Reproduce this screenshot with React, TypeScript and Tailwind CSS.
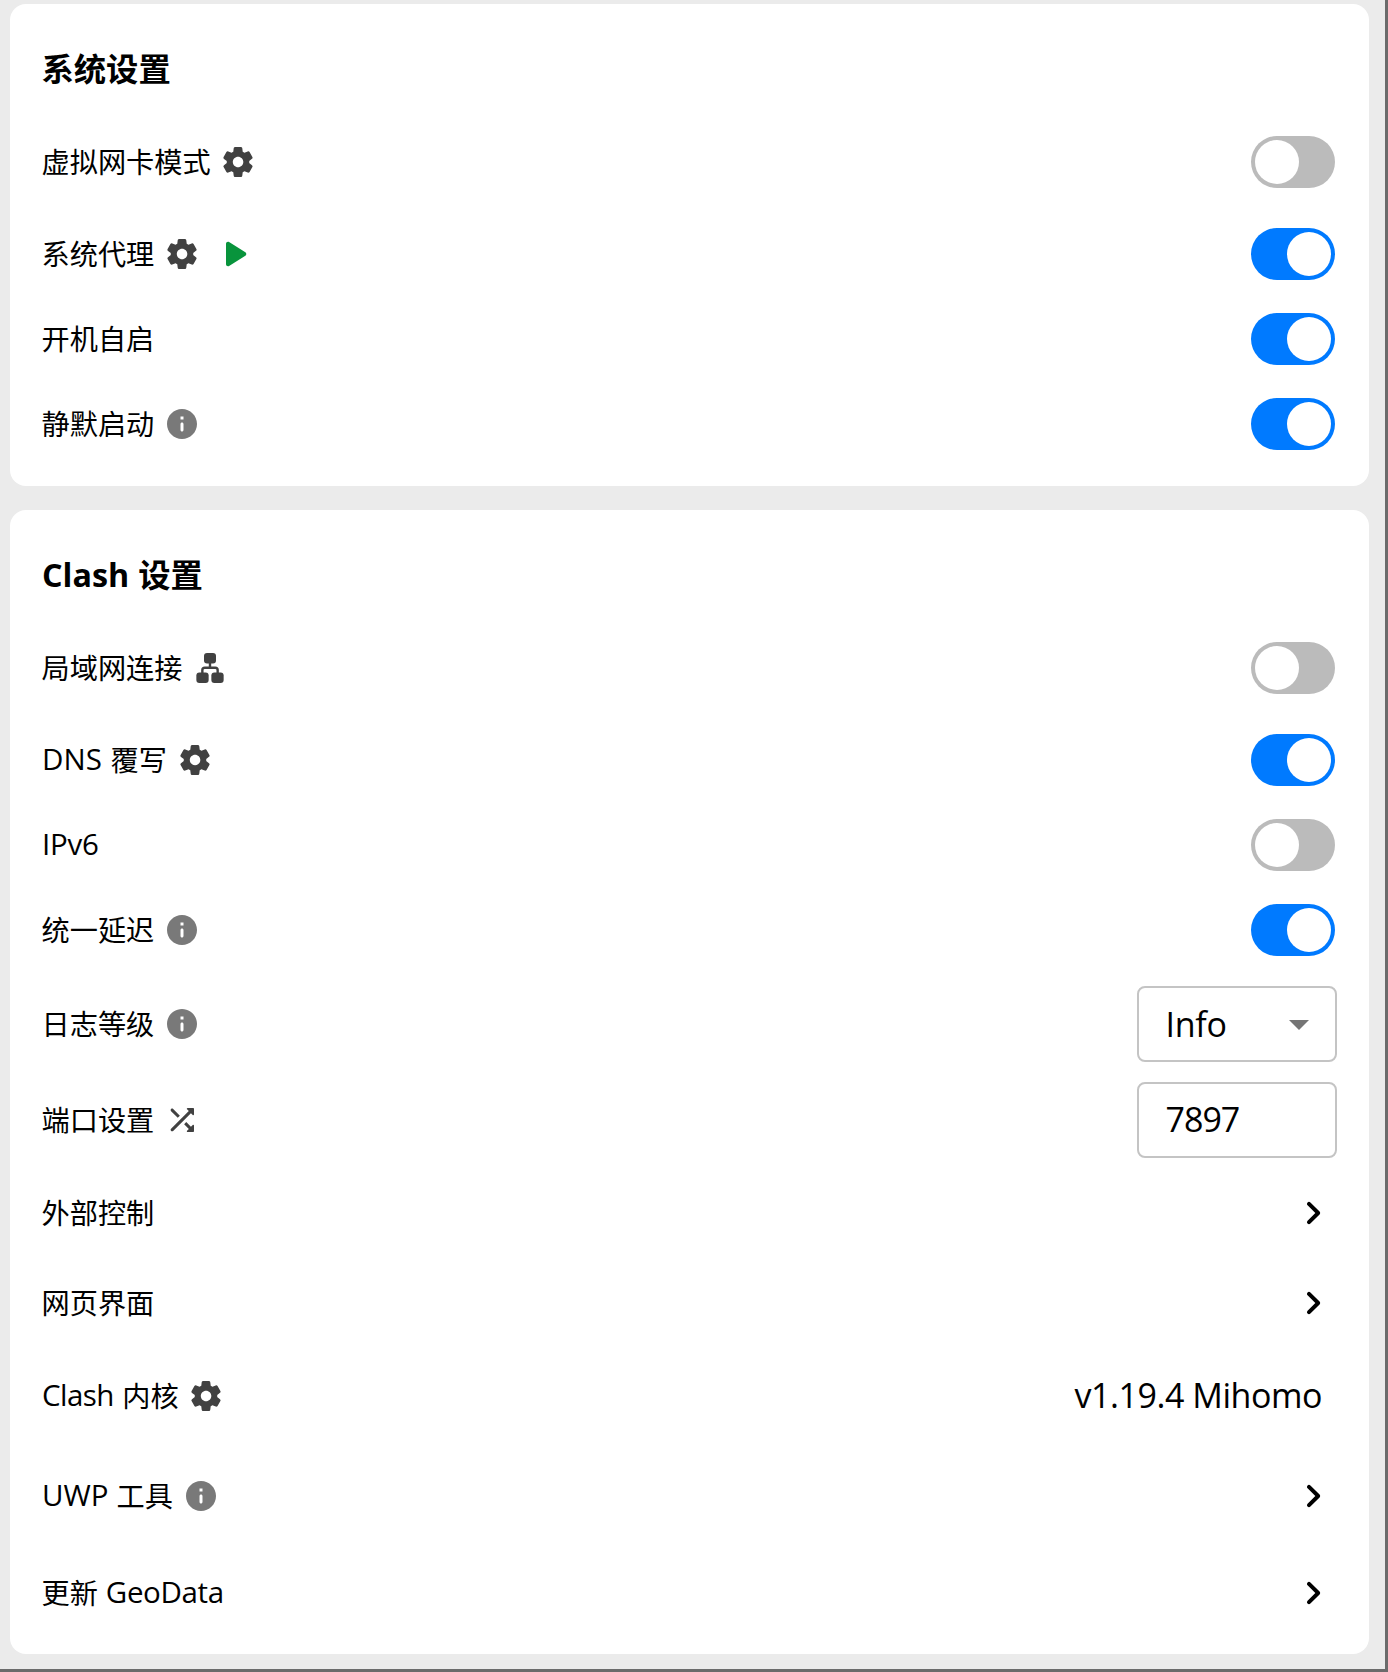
import type { ReactNode } from 'react';

const PATHS = {
  gear: 'M19.5 12c0-.23-.01-.45-.03-.68l1.86-1.41c.4-.3.51-.86.26-1.3l-1.87-3.23c-.25-.44-.79-.62-1.25-.42l-2.15.91c-.37-.26-.76-.49-1.17-.68l-.29-2.31c-.06-.5-.49-.88-.99-.88h-3.73c-.51 0-.94.38-1 .88l-.29 2.31c-.41.19-.8.42-1.17.68l-2.15-.91c-.46-.2-1-.02-1.25.42L2.41 8.62c-.25.44-.14.99.26 1.3l1.86 1.41c-.02.22-.03.44-.03.67s.01.45.03.68l-1.86 1.41c-.4.3-.51.86-.26 1.3l1.87 3.23c.25.44.79.62 1.25.42l2.15-.91c.37.26.76.49 1.17.68l.29 2.31c.06.5.49.88.99.88h3.73c.5 0 .93-.38.99-.88l.29-2.31c.41-.19.8-.42 1.17-.68l2.15.91c.46.2 1 .02 1.25-.42l1.87-3.23c.25-.44.14-.99-.26-1.3l-1.86-1.41c.03-.23.04-.45.04-.68zm-7.46 3.5c-1.93 0-3.5-1.57-3.5-3.5s1.57-3.5 3.5-3.5 3.5 1.57 3.5 3.5-1.57 3.5-3.5 3.5z',
  info: 'M12 2C6.48 2 2 6.48 2 12s4.48 10 10 10 10-4.48 10-10S17.52 2 12 2zm0 15c-.55 0-1-.45-1-1v-4c0-.55.45-1 1-1s1 .45 1 1v4c0 .55-.45 1-1 1zm1-8h-2V7h2v2z',
  play: 'M8 6.82v10.36c0 .79.87 1.27 1.54.84l8.14-5.18c.62-.39.62-1.29 0-1.69L9.54 5.98C8.87 5.55 8 6.03 8 6.82z',
  shuffle: 'M10.59 9.17 6.12 4.7c-.39-.39-1.02-.39-1.41 0-.39.39-.39 1.02 0 1.41l4.46 4.46 1.42-1.4zm4.76-4.32 1.19 1.19L4.7 17.88c-.39.39-.39 1.02 0 1.41.39.39 1.02.39 1.41 0L17.96 7.46l1.19 1.19c.31.31.85.09.85-.36V4.5c0-.28-.22-.5-.5-.5h-3.79c-.45 0-.67.54-.36.85zm-.52 8.56-1.41 1.41 3.13 3.13-1.2 1.2c-.31.31-.09.85.36.85h3.79c.28 0 .5-.22.5-.5v-3.79c0-.45-.54-.67-.85-.35l-1.19 1.19-3.13-3.14z',
  chevron: 'M9.29 15.88 13.17 12 9.29 8.12c-.39-.39-.39-1.02 0-1.41.39-.39 1.02-.39 1.41 0l4.59 4.59c.39.39.39 1.02 0 1.41L10.7 17.3c-.39.39-1.02.39-1.41 0-.38-.39-.39-1.03 0-1.42z',
  caret: 'm7 10 5 5 5-5z',
};

function Icon({ name, className }: { name: keyof typeof PATHS; className: string }) {
  return (
    <svg viewBox="0 0 24 24" className={`shrink-0 fill-current ${className}`}>
      <path d={PATHS[name]} />
    </svg>
  );
}

const Gear = () => <Icon name="gear" className="size-9 text-[#414141]" />;
const Info = () => <Icon name="info" className="size-9 text-[#797979]" />;
const Chevron = () => <Icon name="chevron" className="-mr-0.5 size-12 text-black" />;

function Lan() {
  return (
    <svg viewBox="0 0 24 24" className="size-9 shrink-0 fill-[#414141]">
      <rect x="8" y="2" width="8" height="7" rx="2" />
      <rect x="2.9" y="15" width="8.2" height="7" rx="2" />
      <rect x="12.9" y="15" width="8.2" height="7" rx="2" />
      <path d="M12 8v4M6.9 16v-2.6q0-1.6 1.6-1.6h7q1.6 0 1.6 1.6v2.6" fill="none" stroke="#414141" strokeWidth="1.6" />
    </svg>
  );
}

function Switch({ on = false }: { on?: boolean }) {
  return (
    <button
      role="switch"
      aria-checked={on}
      className={`flex h-[52px] w-[84px] items-center rounded-full p-1 ${on ? 'justify-end bg-[#007aff]' : 'justify-start bg-[#bbbbbb]'}`}
    >
      <span className="size-11 rounded-full bg-white" />
    </button>
  );
}

/* Latin run inside a label, set slightly larger than the Chinese characters. */
function Latin({ className = '', children }: { className?: string; children: ReactNode }) {
  return <span className={`ml-[0.6px] align-[1px] text-[29.5px] leading-none ${className}`}>{children}</span>;
}

function Row({ h, label, icon, children }: { h: string; label: ReactNode; icon?: ReactNode; children?: ReactNode }) {
  return (
    <div className={`flex items-center justify-between ${h}`}>
      <div className="flex items-center gap-2.5">
        <span className="-mr-[0.3px] -ml-[0.5px] text-[28.2px] leading-10 whitespace-pre">{label}</span>
        {icon}
      </div>
      {children}
    </div>
  );
}

function Card({ title, children }: { title: ReactNode; children: ReactNode }) {
  return (
    <section className="rounded-2xl bg-white pr-[34px] pb-4 pl-8">
      <h2 className="-ml-[0.5px] flex h-28 items-center pt-[15px] text-[32.3px] leading-[48px] font-bold whitespace-pre">{title}</h2>
      {children}
    </section>
  );
}

export default function App() {
  return (
    <main className="flex h-[1672px] w-[1388px] flex-col gap-6 overflow-hidden border-r-[3px] border-b-[3px] border-[#6b6b6b] bg-[#ebebeb] pt-1 pr-4 pl-2.5 font-['Open_Sans','Noto_Sans_CJK_SC',sans-serif] text-black">
      <Card title="系统设置">
        <Row h="h-[92px]" label="虚拟网卡模式" icon={<Gear />}><Switch /></Row>
        <Row
          h="h-[92px]"
          label="系统代理"
          icon={<><Gear /><Icon name="play" className="size-12 text-[#08943c]" /></>}
        >
          <Switch on />
        </Row>
        <Row h="h-[78px]" label="开机自启"><Switch on /></Row>
        <Row h="h-[92px]" label="静默启动" icon={<Info />}><Switch on /></Row>
      </Card>

      <Card title={<><span className="mr-[0.5px] ml-[0.5px]">Clash </span>设置</>}>
        <Row h="h-[92px]" label="局域网连接" icon={<Lan />}><Switch /></Row>
        <Row h="h-[92px]" label={<><Latin className="mr-px">DNS </Latin>覆写</>} icon={<Gear />}><Switch on /></Row>
        <Row h="h-[78px]" label={<Latin className="tracking-[-0.3px]">IPv6</Latin>}><Switch /></Row>
        <Row h="h-[92px]" label="统一延迟" icon={<Info />}><Switch on /></Row>
        <Row h="h-24" label="日志等级" icon={<Info />}>
          <div className="-mr-0.5 flex h-[76px] w-[200px] items-center justify-between rounded-lg border-2 border-[#c4c4c4] pr-3 pl-[26.5px]">
            <span className="text-[34px] tracking-[-0.3px]">Info</span>
            <Icon name="caret" className="size-12 text-[#757575]" />
          </div>
        </Row>
        <Row h="h-24" label="端口设置" icon={<Icon name="shuffle" className="size-9 text-[#414141]" />}>
          <div className="-mr-0.5 flex h-[76px] w-[200px] items-center rounded-lg border-2 border-[#c4c4c4] pl-[26.5px]">
            <span className="pb-px text-[34px] tracking-[-1px]">7897</span>
          </div>
        </Row>
        <Row h="h-[90px]" label="外部控制"><Chevron /></Row>
        <Row h="h-[90px]" label="网页界面"><Chevron /></Row>
        <Row h="h-24" label={<><Latin className="mr-[1.5px] tracking-[-0.6px]">Clash </Latin>内核</>} icon={<Gear />}>
          <span className="mr-[13px] pb-px text-[34px] tracking-[-0.45px]">v1.19.4 Mihomo</span>
        </Row>
        <Row h="h-[104px]" label={<><Latin className="mr-[0.3px]">UWP </Latin>工具</>} icon={<Info />}><Chevron /></Row>
        <Row h="h-[90px]" label={<>更新<Latin className="tracking-[-0.35px]"> GeoData</Latin></>}><Chevron /></Row>
      </Card>
    </main>
  );
}
